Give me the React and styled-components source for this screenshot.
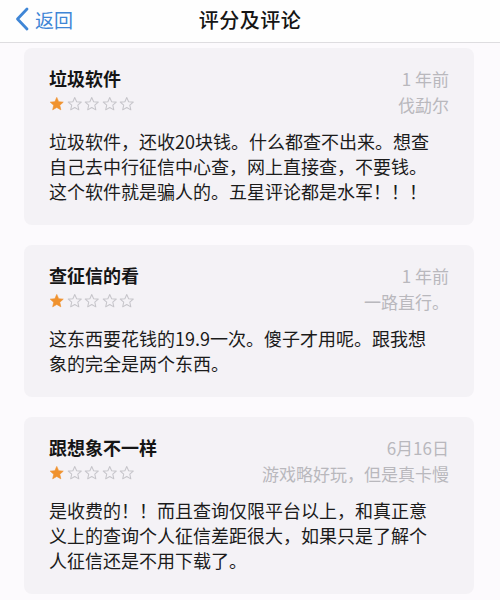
import React from "react";
import styled, { createGlobalStyle } from "styled-components";

const Global = createGlobalStyle`
  html, body { margin: 0; padding: 0; background: #fcfafd; }
  body { font-family: "Noto Sans CJK SC", "Noto Sans", sans-serif; width: 500px; }
`;

const Page = styled.div`
  width: 500px;
  min-height: 600px;
  background: #fcfafd;
`;

const NavBar = styled.div`
  height: 43px;
  box-sizing: border-box;
  display: grid;
  grid-template-columns: 1fr auto 1fr;
  align-items: center;
  background: #fefefe;
  border-bottom: 1px solid #dedde0;
`;

const Back = styled.div`
  display: flex;
  align-items: center;
  gap: 6px;
  padding-left: 15px;
  color: #3f86d6;
  font-size: 19px;
  line-height: 1;
  padding-bottom: 4px;
`;

const Title = styled.div`
  font-size: 20px;
  font-weight: 500;
  color: #151515;
  letter-spacing: 0.5px;
  padding-bottom: 4px;
`;

const List = styled.div`
  display: flex;
  flex-direction: column;
  gap: 20px;
  padding: 5px 26px 8px 24px;
`;

const Card = styled.div`
  background: #f4f2f6;
  border-radius: 8px;
  padding: 19px 25px 21px;
`;

const Row = styled.div`
  display: flex;
  justify-content: space-between;
  align-items: center;
  height: 22px;
  margin-top: ${(p) => (p.$second ? "4px" : "0")};
`;

const ReviewTitle = styled.div`
  font-size: 18px;
  font-weight: 700;
  color: #151515;
`;

const Meta = styled.div`
  font-size: 17px;
  color: #b9b8bd;
  white-space: nowrap;
`;

const Stars = styled.div`
  display: flex;
  gap: 2px;
  align-items: center;
`;

const Body = styled.div`
  margin-top: 14px;
  max-width: 390px;
  font-size: 18px;
  line-height: 25px;
  color: #1b1b1b;
`;

const Star = ({ filled }) => (
  <svg width="15.5" height="15.5" viewBox="0 0 24 24">
    <path
      d="M12 2.2l2.9 6.6 7.2.7-5.4 4.8 1.6 7.1L12 17.7l-6.3 3.7 1.6-7.1-5.4-4.8 7.2-.7z"
      fill={filled ? "#f0922e" : "none"}
      stroke={filled ? "#f0922e" : "#c6c5ca"}
      strokeWidth={filled ? 1 : 1.6}
      strokeLinejoin="round"
    />
  </svg>
);

const reviews = [
  {
    title: "垃圾软件",
    date: "1 年前",
    name: "伐勐尔",
    body: "垃圾软件，还收20块钱。什么都查不出来。想查自己去中行征信中心查，网上直接查，不要钱。这个软件就是骗人的。五星评论都是水军！！！",
  },
  {
    title: "查征信的看",
    date: "1 年前",
    name: "一路直行。",
    body: "这东西要花钱的19.9一次。傻子才用呢。跟我想象的完全是两个东西。",
  },
  {
    title: "跟想象不一样",
    date: "6月16日",
    name: "游戏略好玩，但是真卡慢",
    body: "是收费的！！而且查询仅限平台以上，和真正意义上的查询个人征信差距很大，如果只是了解个人征信还是不用下载了。",
  },
];

export default function App() {
  return (
    <Page>
      <Global />
      <NavBar>
        <Back>
          <svg width="14" height="24" viewBox="0 0 14 24">
            <path d="M12 2L2.5 12 12 22" fill="none" stroke="#3f86d6" strokeWidth="2.8" strokeLinecap="round" strokeLinejoin="round" />
          </svg>
          <span>返回</span>
        </Back>
        <Title>评分及评论</Title>
        <div />
      </NavBar>
      <List>
        {reviews.map((r) => (
          <Card key={r.title}>
            <Row>
              <ReviewTitle>{r.title}</ReviewTitle>
              <Meta>{r.date}</Meta>
            </Row>
            <Row $second>
              <Stars>
                {[0, 1, 2, 3, 4].map((i) => (
                  <Star key={i} filled={i === 0} />
                ))}
              </Stars>
              <Meta>{r.name}</Meta>
            </Row>
            <Body>{r.body}</Body>
          </Card>
        ))}
      </List>
    </Page>
  );
}
